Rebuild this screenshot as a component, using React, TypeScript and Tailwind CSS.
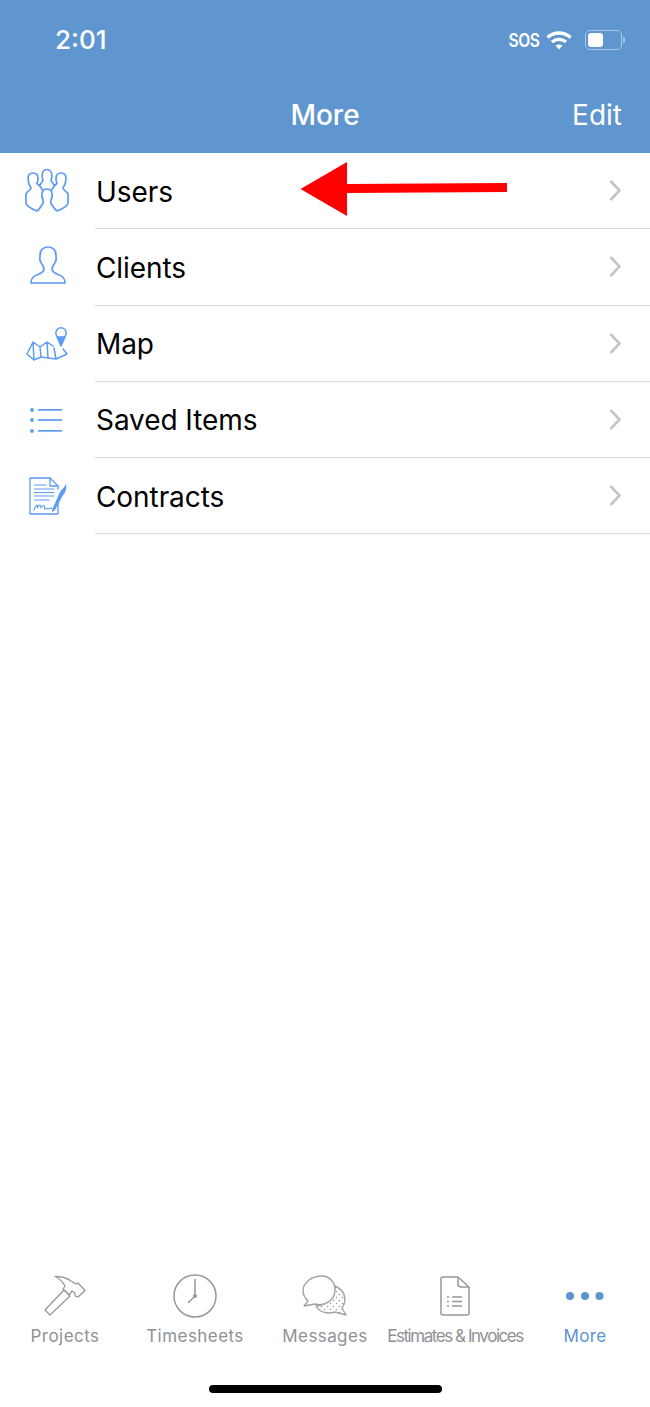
const blue = "#5b9bf3";
const gray = "#96989b";

function UsersIcon() {
  return (
    <svg width="46" height="46" viewBox="0 0 46 46" fill="none" stroke={blue} strokeWidth="1.7" strokeLinejoin="round" strokeLinecap="round">
      <path d="M7 20 C5 17 4 14 4 10.5 C4 7 6 5 9 5 C12 5 14 7 14 10.5 C14 12.5 13.5 14.5 13 15.5 L15.5 17.5 C17 15.5 18.5 14 19 12 C17.5 9 17.5 1.5 23 1.5 C28.5 1.5 28.5 9 27 12 C27.5 14 29 15.5 30.5 17.5 L33 15.5 C32.5 14.5 32 12.5 32 10.5 C32 7 34 5 37 5 C40 5 42 7 42 10.5 C42 14 41 17 39 20 C39 22 43 23 44 26 V35 C44 38 38 41 33 43 C30 41 29 38 27.5 36 C26.5 35 26.5 33.5 27 32 C29 28 29 21 23 21 C17 21 17 28 19 32 C19.5 33.5 19.5 35 18.5 36 C17 38 16 41 13 43 C8 41 2 38 2 35 V26 C3 23 7 22 7 20 Z" />
      <path d="M15.5 17.5 L18.5 22 M30.5 17.5 L27.5 22" />
    </svg>
  );
}

function ClientIcon() {
  return (
    <svg width="46" height="46" viewBox="0 0 46 46" fill="none" stroke={blue} strokeWidth="1.7" strokeLinejoin="round" strokeLinecap="round" className="ml-[2px]">
      <path d="M6 39 H40 C40 34 38 32 33 30.5 C29 29 27 27.5 27 24.5 C27 22.5 29 21 30 18.5 C31.5 16 31.5 14.5 31 13 C31.5 6 28 3 23 3 C18 3 14.5 6 15 13 C14.5 14.5 14.5 16 16 18.5 C17 21 19 22.5 19 24.5 C19 27.5 17 29 13 30.5 C8 32 6 34 6 39 Z" />
    </svg>
  );
}

function MapIcon() {
  return (
    <svg width="42" height="36" viewBox="0 0 42 36" fill="none" stroke={blue} strokeWidth="1.5" strokeLinejoin="round" strokeLinecap="round" className="ml-[1px]">
      <circle cx="35" cy="7" r="5.2" />
      <path d="M31 11 L35 20 L39 11 Z" fill={blue} />
      <path d="M1 28 L7 16 L14 21 L21 16 L27 20 M7 16 L8 34 M14 21 L15 31 M21 16 L22 32 M28 22 L30 33 M37 23 L41 28 L30 33 L22 32 L15 31 L8 34 L1 28" />
    </svg>
  );
}

function ListIcon() {
  return (
    <svg width="34" height="26" viewBox="0 0 34 26" fill={blue} className="mr-[2px]">
      <circle cx="3" cy="3" r="1.9" />
      <circle cx="3" cy="13" r="1.9" />
      <circle cx="3" cy="24" r="1.9" />
      <rect x="9" y="2" width="24" height="1.7" />
      <rect x="9" y="12.2" width="24" height="1.7" />
      <rect x="9" y="23" width="24" height="1.7" />
    </svg>
  );
}

function ContractIcon() {
  return (
    <svg width="38" height="38" viewBox="0 0 38 38" fill="none" stroke={blue} strokeWidth="1.3" strokeLinejoin="round" strokeLinecap="round" className="ml-[2px]">
      <path d="M29 27 V37 H1 V1 H21 L29 9 V12" />
      <path d="M21 1 V9 H29" />
      <path d="M5.5 8 H17 M5.5 12 H25 M5.5 15.5 H25 M5.5 19 H25 M5.5 23 H20" strokeWidth="1.2" />
      <path d="M5 33 C7 27 9 27 8.5 31 C10 27 12 27 12 31 C14 27 16 28 15.5 32 C18 31 20 32 23 31" strokeWidth="1.1" />
      <path d="M23 33 L31 15 C33 12 35 11 37 7 C38 12 36 16 34 18 L26 33 L23 35 Z" fill={blue} stroke="none" />
    </svg>
  );
}

function Chevron() {
  return (
    <svg width="12" height="21" viewBox="0 0 12 21" fill="none" stroke="#c4c4c7" strokeWidth="2.6">
      <path d="M1.5 1 L10.5 10.5 L1.5 20" />
    </svg>
  );
}

function Hammer() {
  return (
    <svg width="44" height="42" viewBox="0 0 44 42" fill="none" stroke={gray} strokeWidth="1.3" strokeLinejoin="round">
      <path d="M2 35 L21 15 L27 21 L7 40 Z" />
      <path d="M12 1.5 C18 1.5 24 3 28 6 L33 9 L35 8 L42 15.5 L35 22 L32 21 V18 L29 16 L26 20 L20 14 L22 11 C20 7 17 4 12 1.5 Z" />
    </svg>
  );
}

function Clock() {
  return (
    <svg width="44" height="44" viewBox="0 0 44 44" fill="none" stroke={gray} strokeWidth="1.5">
      <circle cx="22" cy="22" r="21" />
      <path d="M22 5 V22 L15 29" />
      <circle cx="22" cy="22" r="2" fill={gray} stroke="none" />
    </svg>
  );
}

function Bubbles() {
  return (
    <svg width="46" height="42" viewBox="0 0 46 42" fill="none" stroke="#a0a2a5" strokeWidth="1.4" strokeLinejoin="round">
      <defs>
        <pattern id="dots" width="6" height="6" patternUnits="userSpaceOnUse">
          <circle cx="1.5" cy="1.5" r="0.8" fill={gray} stroke="none" />
          <circle cx="4.5" cy="4.5" r="0.8" fill={gray} stroke="none" />
        </pattern>
      </defs>
      <path d="M14 31 C18 38 26 39 33 37 L44 40 L40 33 C45 26 44 16 33 11 C33 22 25 30 14 31 Z" fill="url(#dots)" />
      <path d="M20 1 C9 1 1 8 1 16 C1 20 3 23 6 26 L2 31 L13 29 C24 32 33 24 33 15 C33 7 27 1 20 1 Z" fill="#fff" />
    </svg>
  );
}

function Doc() {
  return (
    <svg width="30" height="40" viewBox="0 0 30 40" fill="none" stroke={gray} strokeWidth="1.5" strokeLinejoin="round">
      <path d="M3 1 H18 L29 11 V37 C29 38 28 39 27 39 H3 C2 39 1 38 1 37 V3 C1 2 2 1 3 1 Z" />
      <path d="M18 1 V8 C18 10 19 11 21 11 H29" />
      <path d="M12 21 H22 M12 25.5 H22 M12 30 H22" />
      <path d="M7 21 H9 M7 25.5 H9 M7 30 H9" strokeWidth="1.3" />
    </svg>
  );
}

function Dots() {
  return (
    <svg width="38" height="8" viewBox="0 0 38 8" fill="#5c94d4">
      <circle cx="4" cy="4" r="4" />
      <circle cx="19" cy="4" r="4" />
      <circle cx="33.5" cy="4" r="4" />
    </svg>
  );
}

const rows = [
  { label: "Users", icon: <UsersIcon /> },
  { label: "Clients", icon: <ClientIcon /> },
  { label: "Map", icon: <MapIcon /> },
  { label: "Saved Items", icon: <ListIcon /> },
  { label: "Contracts", icon: <ContractIcon /> },
];

const tabs = [
  { label: "Projects", icon: <Hammer />, cls: "w-[130px] tracking-[0.45px] text-[#8e9296]" },
  { label: "Timesheets", icon: <Clock />, cls: "w-[130px] tracking-[0.45px] text-[#8e9296]" },
  { label: "Messages", icon: <Bubbles />, cls: "w-[130px] tracking-[0.4px] text-[#8e9296]" },
  { label: "Estimates & Invoices", icon: <Doc />, cls: "w-[130px] tracking-[-1.45px] text-[#8e9296]" },
  { label: "More", icon: <Dots />, cls: "w-[130px] tracking-[0.4px] text-[#5c94d4]" },
];

export default function App() {
  return (
    <div className="relative flex h-[1407px] w-[650px] flex-col overflow-hidden bg-white font-['Inter','Liberation_Sans',sans-serif] text-black">
      <header className="flex h-[153px] shrink-0 flex-col bg-[#5f96d0] text-white">
        <div className="flex items-center justify-between pl-[55px] pr-[25px] pt-[24px]">
          <span className="text-[26px] font-medium leading-[32px]">2:01</span>
          <div className="flex items-center">
            <span className="flex w-[30px] justify-center pt-[2px] text-[19px] font-semibold leading-[20px] tracking-[-0.5px] [transform:scaleX(0.82)]">SOS</span>
            <svg width="26" height="20" viewBox="0 0 26 20" fill="none" stroke="#fff" strokeWidth="3.4" className="ml-[7px]">
              <path d="M1.5 7.5 C8 1.5 18 1.5 24.5 7.5" />
              <path d="M6 12 C10 8.5 16 8.5 20 12" />
              <path d="M13 19.5 L9.5 15.5 C11.5 14 14.5 14 16.5 15.5 Z" fill="#fff" stroke="none" />
            </svg>
            <div className="ml-[13px] flex items-center gap-[1px]">
              <div className="flex h-[20px] w-[37px] items-center rounded-[5px] border border-[#a9c6e8] p-[2px]">
                <div className="h-[14px] w-[15px] rounded-[3px] bg-white" />
              </div>
              <div className="h-[6px] w-[2px] rounded-r-sm bg-[#a9c6e8]" />
            </div>
          </div>
        </div>
        <div className="relative mt-[41px] flex items-center justify-center">
          <span className="text-[28px] font-medium leading-[36px]">More</span>
          <span className="absolute right-[28px] text-[28px] leading-[36px]">Edit</span>
        </div>
      </header>

      <main className="relative flex-1">
        {rows.map((r) => (
          <div key={r.label} className="flex h-[76.25px] items-center">
            <div className="flex h-full w-[95px] shrink-0 items-center justify-center pr-[2px]">{r.icon}</div>
            <div className="flex h-full flex-1 items-center justify-between border-b border-[#d9d9db] pr-[29px]">
              <span className="pl-[1px] pt-[2px] text-[28px] leading-[36px] tracking-[-0.08px]">{r.label}</span>
              <Chevron />
            </div>
          </div>
        ))}
        <svg className="absolute left-[300px] top-[9px]" width="210" height="56" viewBox="0 0 210 56">
          <path d="M0.5 27 L47 0 V22 L207 21 V30 L47 31 V54 Z" fill="#fe0000" />
        </svg>
      </main>

      <footer className="flex h-[133px] shrink-0 flex-col">
        <nav className="flex h-[100px] justify-center">
          {tabs.map((t) => (
            <div key={t.label} className={`flex flex-col items-center ${t.cls}`}>
              <div className="flex h-[44px] items-center justify-center">{t.icon}</div>
              <span className="mt-[7px] whitespace-nowrap text-[17px] leading-[22px]">{t.label}</span>
            </div>
          ))}
        </nav>
        <div className="flex flex-1 justify-center pt-[11px]">
          <div className="h-[8px] w-[233px] rounded-full bg-black" />
        </div>
      </footer>
    </div>
  );
}
